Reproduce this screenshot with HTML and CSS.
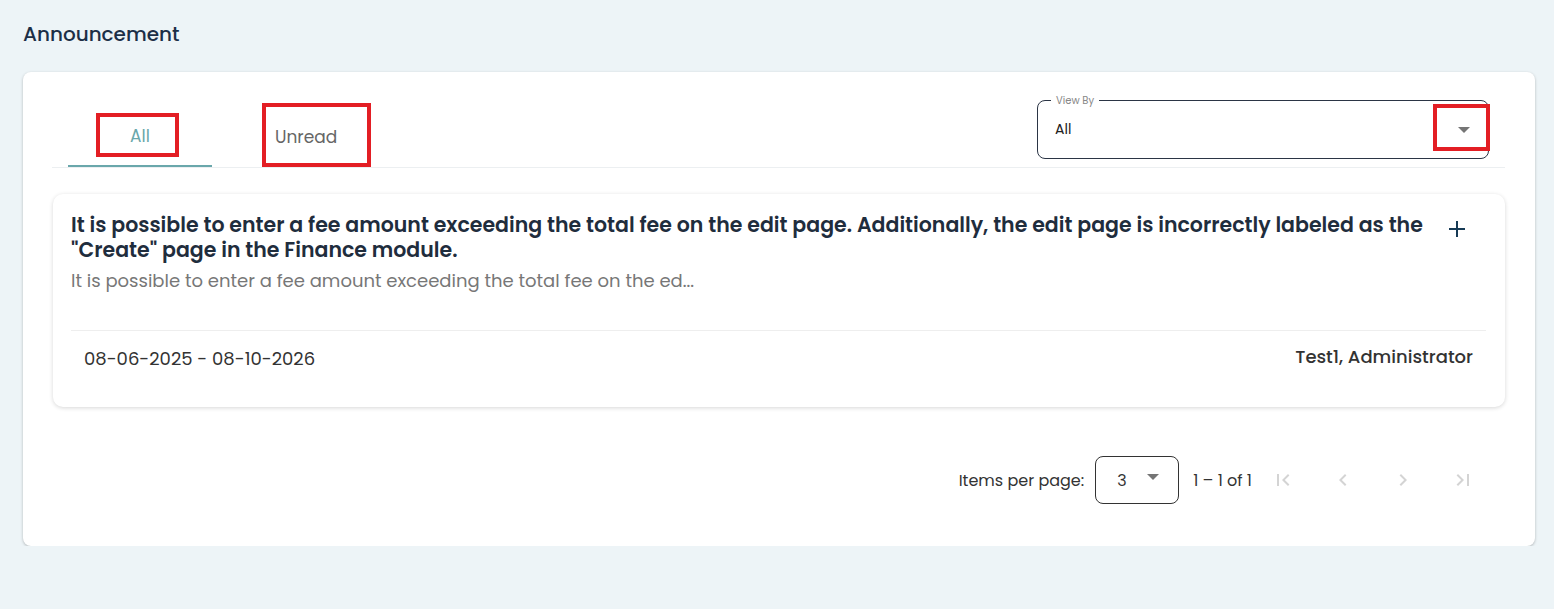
FILE: index.html
```html
<!DOCTYPE html>
<html lang="en">
<head>
  <meta charset="UTF-8">
  <title>Announcement</title>
  <link rel="stylesheet" href="styles.css">
</head>
<body>
  <h1 class="page-title">Announcement</h1>

  <div class="panel">
    <div class="tab-header">
      <div class="tabs">
        <div class="tab tab-active">
          <span class="tab-label">All</span>
          <span class="mark mark-all"></span>
        </div>
        <div class="tab">
          <span class="tab-label">Unread</span>
          <span class="mark mark-unread"></span>
        </div>
      </div>

      <div class="view-by">
        <span class="view-by-label">View By</span>
        <span class="view-by-value">All</span>
        <span class="caret"></span>
        <span class="mark mark-caret"></span>
      </div>
    </div>

    <div class="notice">
      <div class="notice-top">
        <div class="notice-text">
          <h3 class="notice-title">It is possible to enter a fee amount exceeding the total fee on the edit page. Additionally, the edit page is incorrectly labeled as the "Create" page in the Finance module.</h3>
          <p class="notice-desc">It is possible to enter a fee amount exceeding the total fee on the ed...</p>
        </div>
        <svg class="plus" width="18" height="18" viewBox="0 0 18 18">
          <path d="M9 1v16M1 9h16" stroke="#163a55" stroke-width="2" fill="none"/>
        </svg>
      </div>
      <div class="notice-foot">
        <span class="notice-date">08-06-2025 - 08-10-2026</span>
        <span class="notice-author">Test1, Administrator</span>
      </div>
    </div>

    <div class="paginator">
      <span class="pg-label">Items per page:</span>
      <div class="pg-select">
        <span>3</span>
        <span class="caret"></span>
      </div>
      <span class="pg-range">1 – 1 of 1</span>
      <div class="pg-buttons">
        <svg class="pg-btn" width="24" height="24" viewBox="0 0 24 24"><path d="M18.41 16.59 13.82 12l4.59-4.59L17 6l-6 6 6 6zM6 6h2v12H6z" fill="#d4d4d4"/></svg>
        <svg class="pg-btn" width="24" height="24" viewBox="0 0 24 24"><path d="M15.41 7.41 14 6l-6 6 6 6 1.41-1.41L10.83 12z" fill="#d4d4d4"/></svg>
        <svg class="pg-btn" width="24" height="24" viewBox="0 0 24 24"><path d="M10 6 8.59 7.41 13.17 12l-4.58 4.59L10 18l6-6z" fill="#d4d4d4"/></svg>
        <svg class="pg-btn" width="24" height="24" viewBox="0 0 24 24"><path d="M5.59 7.41 10.18 12l-4.59 4.59L7 18l6-6-6-6zM16 6h2v12h-2z" fill="#d4d4d4"/></svg>
      </div>
    </div>
  </div>
</body>
</html>
```

FILE: styles.css
```css
body {
  margin: 0;
  padding: 0 19px 0 23px;
  background: #edf4f7;
  font-family: Poppins, "Open Sans", sans-serif;
  color: #1f2d3d;
}
.page-title {
  margin: 0;
  padding-top: 19px;
  height: 72px;
  box-sizing: border-box;
  font-size: 20px;
  font-weight: 500;
  line-height: 30px;
  color: #1c2f47;
}
.panel {
  background: #fff;
  border-radius: 8px;
  box-shadow: 0 1px 3px rgba(0,0,0,0.25);
  padding: 28px 30px 0 29px;
  height: 474px;
  box-sizing: border-box;
}
.tab-header {
  display: flex;
  justify-content: space-between;
  align-items: flex-end;
  border-bottom: 1px solid #eceff1;
}
.tabs {
  display: flex;
  padding-left: 16px;
}
.tab {
  position: relative;
  height: 61px;
  display: flex;
  align-items: center;
  font-size: 17px;
  color: #666;
}
.tab:first-child {
  width: 144px;
  justify-content: center;
}
.tab:nth-child(2) {
  padding-left: 63px;
}
.tab-active {
  color: #6aa7ab;
  border-bottom: 2px solid #6aa7ab;
  height: 59px;
}
.mark {
  position: absolute;
  border: 4px solid #e31e24;
  box-sizing: border-box;
}
.mark-all {
  left: 28px;
  top: 7px;
  width: 83px;
  height: 44px;
}
.mark-unread {
  left: 50px;
  top: -3px;
  width: 109px;
  height: 64px;
}
.view-by {
  position: relative;
  width: 452px;
  height: 59px;
  box-sizing: border-box;
  border: 1px solid #2b3545;
  border-radius: 8px;
  margin: 0 16px 8px 0;
  display: flex;
  align-items: center;
  padding: 0 17px;
  font-size: 14px;
  color: #222;
}
.view-by-label {
  position: absolute;
  top: -8px;
  left: 13px;
  padding: 0 5px;
  background: #fff;
  font-size: 10px;
  color: #888;
}
.view-by-value {
  flex: 1;
}
.caret {
  width: 0;
  height: 0;
  border-left: 6px solid transparent;
  border-right: 6px solid transparent;
  border-top: 6px solid #757575;
}
.view-by .caret {
  margin-right: 1px;
}
.mark-caret {
  right: -2px;
  top: 3px;
  width: 57px;
  height: 47px;
}
.notice {
  margin: 26px 0 0 1px;
  border-radius: 10px;
  box-shadow: 0 1px 4px rgba(0,0,0,0.16);
  padding: 18px 19px 0 18px;
  height: 213px;
  box-sizing: border-box;
}
.notice-top {
  display: flex;
  align-items: flex-start;
  gap: 12px;
}
.notice-text {
  flex: 1;
}
.notice-title {
  margin: 0;
  font-size: 20.5px;
  font-weight: 600;
  line-height: 25px;
  color: #1f2d3d;
}
.notice-desc {
  margin: 6px 0 0;
  font-size: 18px;
  line-height: 26px;
  color: #777;
}
.plus {
  margin: 8px 20px 0 0;
  flex-shrink: 0;
}
.notice-foot {
  margin-top: 36px;
  border-top: 1px solid #eeeeee;
  display: flex;
  justify-content: space-between;
  align-items: center;
  padding: 15px 13px 0;
  font-size: 18px;
  line-height: 26px;
  color: #333;
}
.notice-author {
  font-weight: 500;
  margin-top: -4px;
}
.paginator {
  display: flex;
  justify-content: flex-end;
  align-items: center;
  margin-top: 49px;
  padding-right: 30px;
  font-size: 16px;
  color: #333;
}
.pg-label {
  margin-right: 11px;
}
.pg-select {
  width: 84px;
  height: 48px;
  box-sizing: border-box;
  border: 1px solid #333;
  border-radius: 8px;
  display: flex;
  align-items: center;
  justify-content: space-between;
  padding: 0 19px 6px 21px;
  margin-right: 14px;
}
.pg-select span:first-child {
  margin-top: 6px;
}
.pg-buttons {
  display: flex;
  gap: 36px;
  margin-left: 19px;
}
```
